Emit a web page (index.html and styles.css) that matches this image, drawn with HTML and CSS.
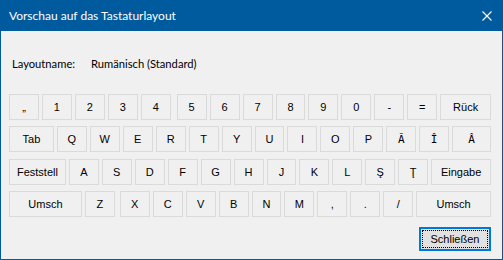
FILE: index.html
```html
<!DOCTYPE html>
<html lang="de">
<head>
    <meta charset="UTF-8">
    <title>Vorschau auf das Tastaturlayout</title>
    <link rel="stylesheet" href="styles.css">
</head>
<body>
    <div class="window">
        <div class="titlebar">
            <span class="title">Vorschau auf das Tastaturlayout</span>
            <svg class="close" width="10" height="10" viewBox="0 0 10 10">
                <path d="M0.5 0.5 L9.5 9.5 M9.5 0.5 L0.5 9.5" stroke="#fff" stroke-width="1.1" fill="none"/>
            </svg>
        </div>
        <div class="content">
            <div class="info">
                <span class="info-label">Layoutname:</span>
                <span class="info-value">Rumänisch (Standard)</span>
            </div>

            <div class="keyboard">
                <div class="row">
                    <div class="key">„</div>
                    <div class="key">1</div>
                    <div class="key">2</div>
                    <div class="key">3</div>
                    <div class="key">4</div>
                    <div class="key key-split">5</div>
                    <div class="key">6</div>
                    <div class="key">7</div>
                    <div class="key">8</div>
                    <div class="key">9</div>
                    <div class="key">0</div>
                    <div class="key">-</div>
                    <div class="key">=</div>
                    <div class="key key-back">Rück</div>
                </div>
                <div class="row">
                    <div class="key key-tab">Tab</div>
                    <div class="key">Q</div>
                    <div class="key">W</div>
                    <div class="key">E</div>
                    <div class="key">R</div>
                    <div class="key">T</div>
                    <div class="key">Y</div>
                    <div class="key">U</div>
                    <div class="key">I</div>
                    <div class="key">O</div>
                    <div class="key">P</div>
                    <div class="key key-mono">Ă</div>
                    <div class="key key-mono">Î</div>
                    <div class="key key-mono key-last">Â</div>
                </div>
                <div class="row row-home">
                    <div class="key key-caps">Feststell</div>
                    <div class="key">A</div>
                    <div class="key">S</div>
                    <div class="key">D</div>
                    <div class="key">F</div>
                    <div class="key">G</div>
                    <div class="key">H</div>
                    <div class="key">J</div>
                    <div class="key">K</div>
                    <div class="key">L</div>
                    <div class="key">Ş</div>
                    <div class="key">Ţ</div>
                    <div class="key key-enter">Eingabe</div>
                </div>
                <div class="row">
                    <div class="key key-shift-l">Umsch</div>
                    <div class="key">Z</div>
                    <div class="key key-gap">X</div>
                    <div class="key">C</div>
                    <div class="key">V</div>
                    <div class="key">B</div>
                    <div class="key">N</div>
                    <div class="key">M</div>
                    <div class="key">,</div>
                    <div class="key">.</div>
                    <div class="key">/</div>
                    <div class="key key-shift-r">Umsch</div>
                </div>
            </div>

            <div class="actions">
                <button class="btn-close">Schließen</button>
            </div>
        </div>
    </div>
</body>
</html>
```

FILE: styles.css
```css
* {
    margin: 0;
    padding: 0;
    box-sizing: border-box;
}


body {
    width: 503px;
    height: 260px;
    background-color: #f0f0f0;
    font-family: "Liberation Sans", Arial, sans-serif;
    font-size: 11px;
    color: #000;
    overflow: hidden;
}


.window {
    width: 503px;
    height: 260px;
    border: 1px solid #005a9e;
    border-top: none;
    background-color: #f0f0f0;
}


.titlebar {
    height: 31px;
    margin: 0 -1px;
    background-color: #005a9e;
    display: flex;
    align-items: center;
    justify-content: space-between;
    padding: 0 11px 0 9px;
}


.title {
    color: #fff;
    font-family: Lato, sans-serif;
    font-size: 12px;
}


.close {
    display: block;
}


.content {
    padding: 0 11px 0 8px;
}


.info {
    display: flex;
    height: 16px;
    line-height: 16px;
    margin-top: 25px;
    padding-left: 3px;
    font-family: Lato, sans-serif;
    font-size: 11.2px;
}


.info-label {
    width: 79px;
}


.keyboard {
    margin-top: 22px;
    display: flex;
    flex-direction: column;
    gap: 6px;
}


.row {
    display: flex;
    gap: 3px;
}


.row-home {
    margin-top: 1px;
}


.key {
    width: 30px;
    height: 26px;
    border: 1px solid #dadada;
    background-color: #f0f0f0;
    display: flex;
    align-items: center;
    justify-content: center;
    white-space: nowrap;
}


.key-split {
    margin-left: 3px;
}


.key-gap {
    margin-left: 2px;
}


.key-back {
    width: 51px;
}


.key-tab {
    width: 45px;
}


.key-last {
    width: 39px;
}


.key-caps {
    width: 57px;
}


.key-enter {
    width: 60px;
}


.key-shift-l {
    width: 73px;
}


.key-shift-r {
    width: 75px;
}


.key-mono {
    font-family: "DejaVu Sans Mono", monospace;
    font-size: 11px;
}


.actions {
    display: flex;
    justify-content: flex-end;
    margin-top: 10px;
}


.btn-close {
    width: 72px;
    height: 24px;
    border: 1px solid #0078d7;
    box-shadow: inset 0 0 0 1px #0078d7;
    outline: 1px dotted #000;
    outline-offset: -4px;
    background-color: #e1e1e1;
    font-family: "Liberation Sans", Arial, sans-serif;
    font-size: 11px;
    color: #000;
}
```
